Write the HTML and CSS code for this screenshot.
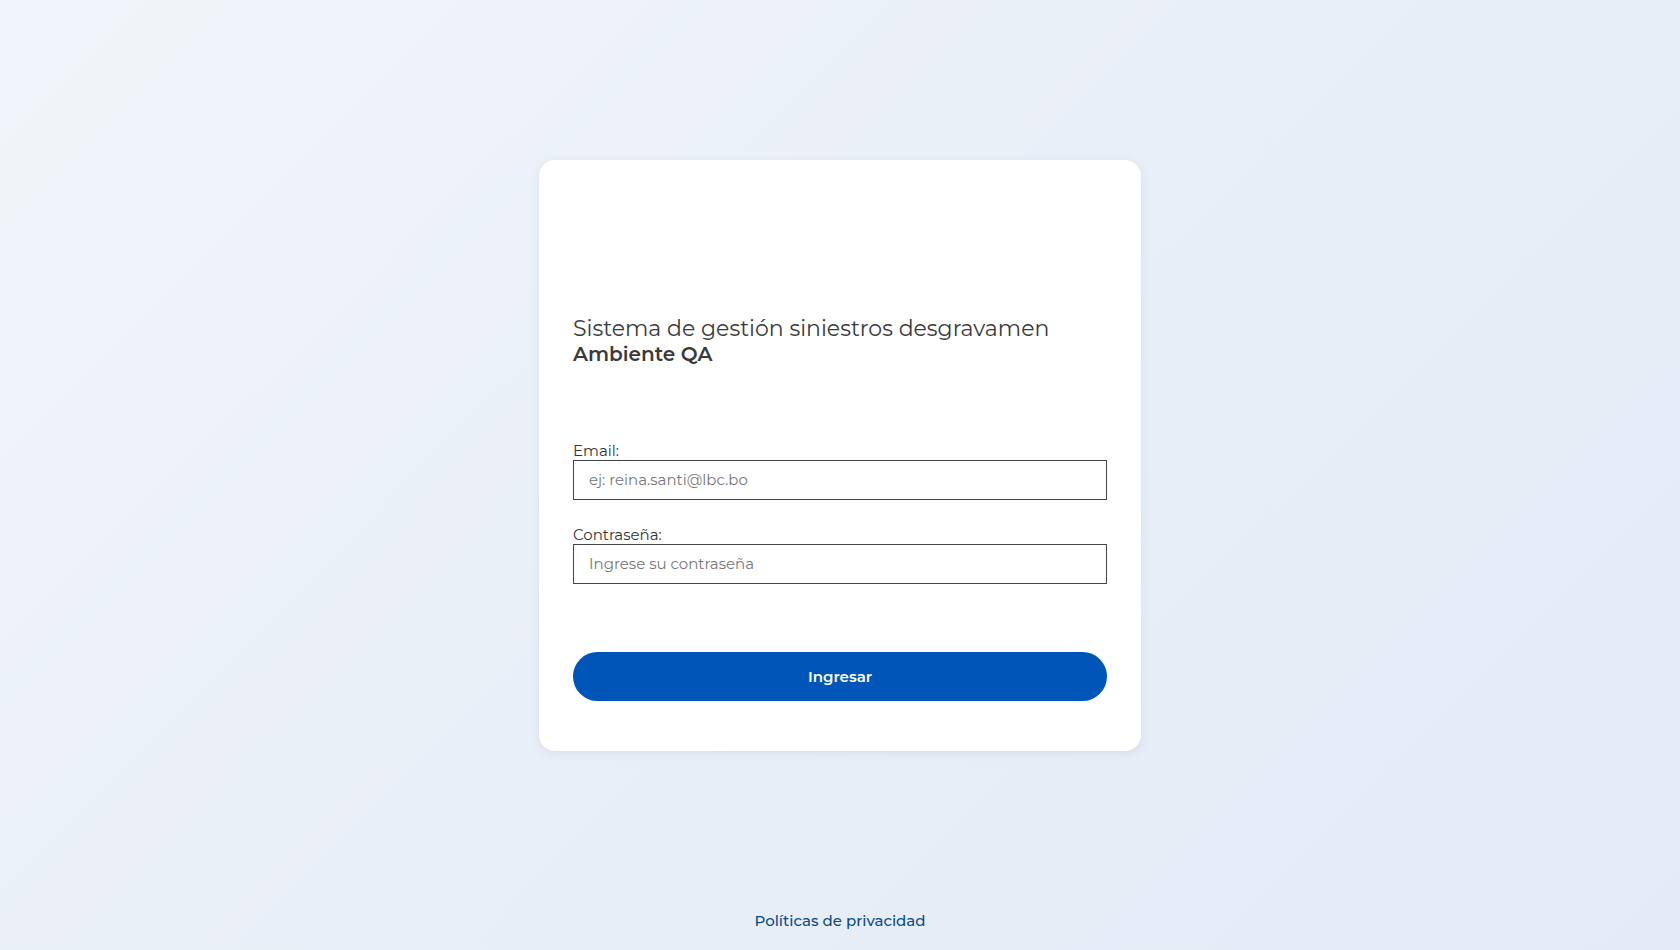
FILE: index.html
```html
<!DOCTYPE html>
<html lang="es">
<head>
<meta charset="utf-8">
<title>Sistema de gestión siniestros desgravamen</title>
<link rel="stylesheet" href="styles.css">
</head>
<body>
<main class="main">
  <section class="card">
    <div class="logo"></div>
    <h1 class="title">Sistema de gestión siniestros desgravamen<br><strong class="env">Ambiente QA</strong></h1>
    <form class="form">
      <label class="field">
        <span class="label">Email:</span>
        <input class="input" type="text" placeholder="ej: reina.santi@lbc.bo">
      </label>
      <label class="field">
        <span class="label">Contraseña:</span>
        <input class="input" type="password" placeholder="Ingrese su contraseña">
      </label>
      <button class="btn" type="button">Ingresar</button>
    </form>
  </section>
</main>
<footer class="footer">
  <a class="link" href="#">Políticas de privacidad</a>
</footer>
</body>
</html>
```
FILE: styles.css
```css
* { box-sizing: border-box; }
html, body { margin: 0; height: 100%; }
body {
  font-family: "Montserrat", "Inter", "Open Sans", sans-serif;
  background: linear-gradient(135deg, #f1f5fa 0%, #e9eff8 50%, #e4ebf7 100%);
  display: flex;
  flex-direction: column;
  color: #333;
}
.main {
  flex: 1;
  display: flex;
  align-items: center;
  justify-content: center;
  padding-bottom: 2px;
}
.card {
  width: 602px;
  height: 591px;
  background: #fff;
  border-radius: 16px;
  box-shadow: 0 2px 10px rgba(60, 80, 120, 0.10);
  padding: 32px 34px 50px;
}
.logo { height: 124px; }
.title {
  margin: 0;
  font-size: 22px;
  line-height: 25px;
  font-weight: 400;
  color: #3b3b3b;
}
.env { font-size: 20px; font-weight: 600; color: #3a3a3a; }
.form { margin-top: 74px; display: flex; flex-direction: column; }
.field { display: flex; flex-direction: column; margin-bottom: 25px; }
.field:last-of-type { margin-bottom: 68px; }
.label {
  font-size: 15px;
  line-height: 19px;
  color: #333;
}
.input {
  height: 40px;
  border: 1px solid #444;
  border-radius: 0;
  padding: 0 15px;
  font-family: inherit;
  font-size: 15px;
  color: #333;
  background: #fff;
  outline: none;
}
.input::placeholder { color: #777; }
.btn {
  height: 49px;
  border: 0;
  border-radius: 25px;
  background: #0056b8;
  color: #fff;
  font-family: inherit;
  font-size: 15px;
  font-weight: 600;
  cursor: pointer;
}
.footer {
  height: 38px;
  display: flex;
  justify-content: center;
}
.link {
  font-size: 15px;
  line-height: 18px;
  font-weight: 500;
  color: #0a4c88;
  text-decoration: none;
}
```
